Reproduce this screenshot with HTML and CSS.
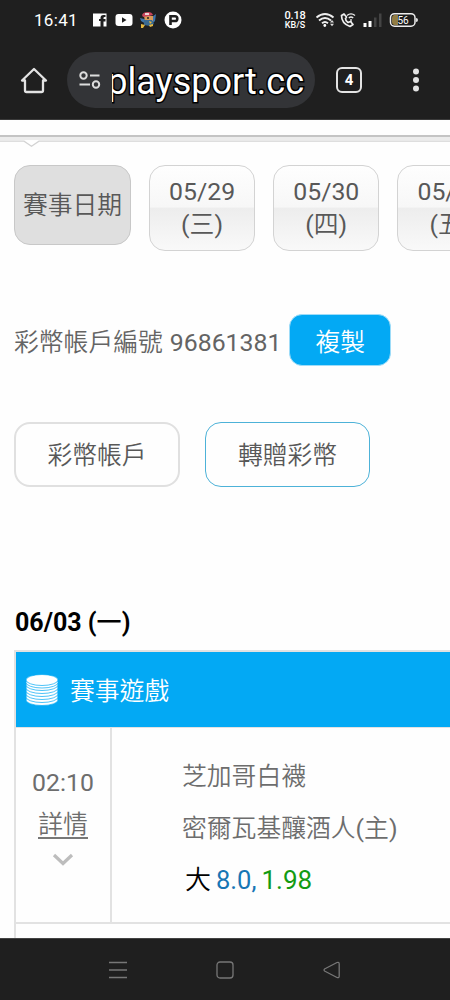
FILE: index.html
```html
<!DOCTYPE html>
<html lang="zh-Hant">
<head>
<meta charset="utf-8">
<meta name="viewport" content="width=device-width">
<title>playsport.cc</title>
<link rel="stylesheet" href="styles.css">
</head>
<body>
<div class="screen">
  <header class="chrome">
    <div class="status">
      <span class="clock">16:41</span>
      <svg class="notifs" width="92" height="20" viewBox="0 0 92 20">
        <path fill="#fff" d="M2 3.500h13.500v13H12.500v-5h2V9h-2V8q0-1 1-1h1V5h-2q-3 0-3 3v1H8v2h1.500v5.500H2z"/>
        <rect x="24.500" y="4" width="17" height="12" rx="3" fill="#fff"/>
        <path fill="#1f1f1f" d="M31 7.300v5.400l4.500-2.700z"/>
        <path fill="#3f74a8" d="M49 8l4 1 8-2 4-3-1 7-4 4-5-1-5-3z"/>
        <path fill="#d99a58" d="M53 6h9v5h-8z"/>
        <path fill="#c9455c" d="M51 5q1-3 6-3 4 0 5 3l-4 1-6 1z"/>
        <path fill="#eed5d5" d="M54 3h4v2h-4z"/>
        <path fill="#3b6a90" d="M53 10h8l2 4-4 2-6-1z"/>
        <path fill="#e4b840" d="M50 14l4 1-2 3h-2zM58 11l3 1-2 2zM58 15l4-1v2l-3 1z"/>
        <circle cx="57" cy="8" r="1" fill="#222"/>
        <circle cx="82" cy="10" r="8.500" fill="#fff"/>
        <path fill="none" stroke="#1f1f1f" stroke-width="2.600" d="M79.500 15V6.300H84q2.300 0 2.300 2.400T84 11h-4.500"/>
      </svg>
      <div class="speed"><span>0.18</span><span class="unit">KB/S</span></div>
      <svg class="signals" width="106" height="20" viewBox="0 0 106 20">
        <g fill="none" stroke="#eee" stroke-width="1.900">
          <path d="M1.500 7.500q8.500-7 17 0M4 10.500q6-5 12 0M7 13.200q3-2.500 6 0"/>
        </g>
        <circle cx="9.800" cy="15.500" r="1.400" fill="#fff"/>
        <path fill="#ddd" d="M15 12.500l2-2.500 2 2.500zM15 13.800h4l-2 2.500z"/>
        <path fill="none" stroke="#eee" stroke-width="1.700" stroke-linejoin="round" d="M29 4l-2.500 1.500q0 8 8.500 11l3-2-2.500-3-2.500 1q-2.500-1.500-2.500-4l1-1.500z"/>
        <path fill="none" stroke="#eee" stroke-width="1.400" d="M32 5.500q4-3.300 8 0M33.800 8q2.200-2 4.400 0"/>
        <path stroke="#eee" stroke-width="1.300" d="M36 9v3"/>
        <path fill="#fff" d="M48.500 13h3v4h-3zM53.500 11h3v6h-3z"/>
        <path fill="#444" d="M59 7.500h2.500V17H59zM64 3.500h2.500V17H64z"/>
        <rect x="75.500" y="3.700" width="24.500" height="12.500" rx="4" fill="#1c1c1c" stroke="#eee" stroke-width="1.500"/>
        <path fill="#917c43" d="M79 5h4v10h-4q-2-.5-2-3V8q0-2.500 2-3z"/>
        <path fill="#ddd" d="M101 8q2 0 2 2t-2 2z"/>
        <text class="battery" x="88" y="13.600" text-anchor="middle">56</text>
      </svg>
    </div>
    <div class="toolbar">
      <svg class="home" width="28" height="28" viewBox="0 0 28 28"><path fill="none" stroke="#e3e3e3" stroke-width="2.300" stroke-linejoin="round" d="M2 14.500L14 3l12 11.500h-3V24.500q0 1.500-1.500 1.500h-15Q5 26 5 24.500V14.500z"/></svg>
      <div class="omnibox">
        <svg width="24" height="20" viewBox="0 0 24 20"><g fill="none" stroke="#ddd" stroke-width="2"><circle cx="5.500" cy="5.500" r="3.200"/><path d="M12 5.500h9.500M1.500 14.500H12"/><circle cx="18" cy="14.500" r="3.200"/></g></svg>
        <div class="url"><span>playsport.cc</span></div>
      </div>
      <div class="tabs">4</div>
      <svg class="more" width="8" height="26" viewBox="0 0 8 26" fill="#e3e3e3"><circle cx="4" cy="4.500" r="3"/><circle cx="4" cy="13" r="3"/><circle cx="4" cy="21.500" r="3"/></svg>
    </div>
  </header>

  <main class="page">
    <svg class="divider" width="450" height="20" viewBox="0 0 450 20">
      <path fill="#c4c4c4" d="M0 0h450v2H0z"/>
      <path fill="#ececec" d="M0 2h450v3H0z"/>
      <path fill="#fff" stroke="#d3d3d3" stroke-width="1.300" d="M-2 6.200H24l7.500 5L39 6.200H452"/>
    </svg>
    <nav class="dates">
      <div class="date-label">賽事日期</div>
      <div class="date"><b>05/29</b><span><b>(</b>三<b>)</b></span></div>
      <div class="date"><b>05/30</b><span><b>(</b>四<b>)</b></span></div>
      <div class="date"><b>05/31</b><span><b>(</b>五<b>)</b></span></div>
    </nav>
    <div class="account">
      <span class="number">彩幣帳戶編號 <b>96861381</b></span>
      <div class="copy">複製</div>
    </div>
    <div class="actions">
      <div class="action">彩幣帳戶</div>
      <div class="action gift">轉贈彩幣</div>
    </div>
    <h2 class="day">06/03 (<span>一</span>)</h2>
    <section class="games">
      <div class="games-head">
        <svg width="32" height="32" viewBox="0 0 32 32">
          <g fill="#fff" stroke="#03a9f4" stroke-width=".7">
            <ellipse cx="16" cy="26" rx="16" ry="5.500"/>
            <ellipse cx="16" cy="23" rx="16" ry="5.500"/>
            <ellipse cx="16" cy="20" rx="16" ry="5.500"/>
            <ellipse cx="16" cy="17" rx="16" ry="5.500"/>
            <ellipse cx="16" cy="14" rx="16" ry="5.500"/>
            <ellipse cx="16" cy="11" rx="16" ry="5.500"/>
            <ellipse cx="16" cy="8.500" rx="16" ry="5.500"/>
            <ellipse cx="16" cy="6" rx="16" ry="5.500"/>
          </g>
        </svg>
        <span>賽事遊戲</span>
      </div>
      <div class="game">
        <div class="time">
          <b>02:10</b>
          <span class="detail">詳情</span>
          <svg width="22" height="14" viewBox="0 0 22 14"><path fill="none" stroke="#bdbdbd" stroke-width="3.200" d="M2 2l9 8.500L20 2"/></svg>
        </div>
        <div class="teams">
          <span>芝加哥白襪</span>
          <span>密爾瓦基釀酒人<b>(</b>主<b>)</b></span>
          <div class="odds"><span class="over">大</span><b class="line">8.0,</b><b class="rate">1.98</b></div>
        </div>
      </div>
    </section>
  </main>

  <footer class="navbar">
    <svg width="20" height="20" viewBox="0 0 20 20"><path fill="none" stroke="#777" stroke-width="1.400" d="M1 2.500h18M1 10h18M1 17.500h18"/></svg>
    <svg width="20" height="20" viewBox="0 0 20 20"><rect x="2" y="2" width="16" height="16" rx="3" fill="none" stroke="#777" stroke-width="1.300"/></svg>
    <svg width="20" height="20" viewBox="0 0 20 20"><path fill="none" stroke="#777" stroke-width="1.300" stroke-linejoin="round" d="M2.500 9q-1 1 0 2l12.500 6.500q2.200.8 2.200-1.500V4q0-2.300-2.200-1.500z"/></svg>
  </footer>
</div>
</body>
</html>
```
FILE: styles.css
```css
* { box-sizing: border-box; }
body { margin: 0; }
svg { display: block; flex: none; }
b { font-weight: 400; }
.screen {
  width: 450px; height: 1000px; overflow: hidden;
  display: flex; flex-direction: column;
  background: #fefefe; color: #585858;
  font: 350 24.800px/33px Roboto, "Noto Sans CJK TC", sans-serif;
  white-space: nowrap;
}
.chrome { flex: none; height: 120px; background: #1f1f1f; border-bottom: 1px solid #3a3a3a; }
.status { height: 40px; display: flex; align-items: center; color: #fff; }
.clock { width: 57px; margin-left: 34px; font-size: 17px; font-weight: 400; letter-spacing: .3px; }
.speed { margin-left: 99px; width: 26px; display: flex; flex-direction: column; align-items: center; font-size: 11px; font-weight: 500; line-height: 11px; letter-spacing: -.2px; }
.unit { font-size: 9px; line-height: 9px; letter-spacing: 0; }
.signals { margin-left: 7px; }
.battery { font: 400 10px Roboto, sans-serif; fill: #fff; }
.toolbar { height: 79px; display: flex; align-items: center; padding-left: 20px; }
.home { margin-right: 19px; }
.omnibox { width: 248px; height: 56px; border-radius: 28px; background: #333437; display: flex; align-items: center; padding-left: 11px; }
.url { width: 194px; margin-left: 10px; height: 50px; overflow: hidden; display: flex; justify-content: flex-end; padding-right: 2px; color: #fff; font-size: 36px; font-weight: 400; line-height: 54px; }
.url span { flex: none; -webkit-text-stroke: 3px #000; paint-order: stroke fill; }
.tabs { width: 26px; height: 26px; margin-left: 21px; border: 2.500px solid #e3e3e3; border-radius: 6px; color: #fff; font-size: 15px; font-weight: 700; line-height: 22px; text-align: center; }
.more { margin-left: 50px; }
.page { flex: 1; min-height: 0; overflow: hidden; padding-top: 15px; }
.dates { display: flex; gap: 18px; padding: 10px 0 0 14px; }
.date-label { flex: none; width: 117px; height: 80px; border: 1px solid #c8c8c8; border-radius: 16px; background: #dfdfdf; line-height: 80px; text-align: center; }
.date { flex: none; width: 106.200px; height: 86px; padding-top: 9px; border: 1px solid #d3d3d3; border-radius: 16px; background: linear-gradient(#fefefe 0, #f7f7f7 49%, #ededed 50%, #f9f9f9 100%); display: flex; flex-direction: column; align-items: center; }
.account { display: flex; align-items: center; gap: 8px; margin-top: 63px; padding-left: 14px; }
.number { padding-top: 5px; word-spacing: 1px; color: #646464; }
.copy { width: 102px; height: 52px; border: 1px solid #9edcf8; border-radius: 13px; background: #03a9f4; color: #fff; text-align: center; line-height: 56px; }
.actions { display: flex; gap: 25px; margin-top: 56px; padding-left: 14px; }
.action { width: 166px; height: 65px; border: 2px solid #e0e0e0; border-radius: 16px; text-align: center; line-height: 64px; }
.gift { width: 165px; border: 1px solid #4db2d8; line-height: 66px; }
.day { margin: 119px 0 0 15px; color: #000; font-size: 25px; font-weight: 700; line-height: 34px; }
.day span { font-weight: 500; }
.games { margin: 10px 0 0 14px; height: 300px; border: 2px solid #e2e2e2; border-right: 0; }
.games-head { height: 76px; border-bottom: 1px solid #e2e2e2; background: #03a9f4; color: #fff; display: flex; align-items: center; gap: 12px; padding-left: 10px; }
.games-head span { padding-top: 4px; }
.game { height: 196px; display: flex; border-bottom: 2px solid #e2e2e2; }
.time { width: 96px; border-right: 2px solid #e2e2e2; display: flex; flex-direction: column; align-items: center; padding-top: 38px; color: #6d6d6d; }
.detail { margin-top: 9px; border-bottom: 2px solid #777; line-height: 33px; height: 31px; }
.time svg { margin-top: 14px; }
.teams { display: flex; flex-direction: column; padding: 23px 0 0 70px; line-height: 52px; color: #6d6d6d; }
.odds { display: flex; gap: 5px; padding-left: 3px; font-size: 26px; line-height: 51px; }
.over { color: #000; }
.line { color: #1776b5; font-size: 25.500px; }
.rate { color: #139b13; }
.navbar { flex: none; height: 62px; border-top: 1px solid #444; background: #1f1f1f; display: flex; align-items: center; padding-left: 108px; gap: 87px; }
```
